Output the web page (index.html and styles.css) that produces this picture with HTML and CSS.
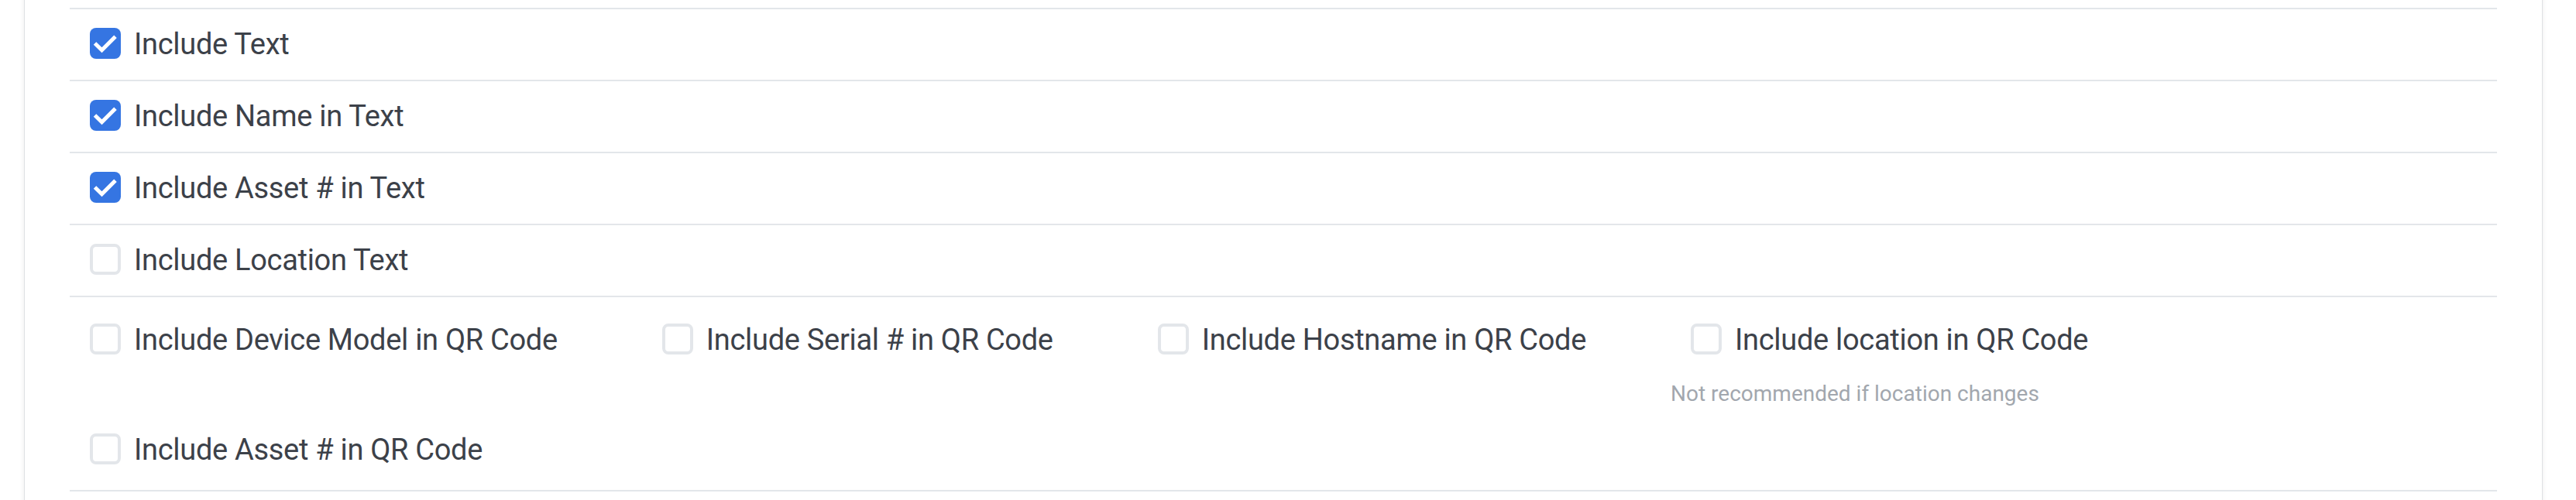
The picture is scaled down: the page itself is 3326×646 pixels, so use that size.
FILE: index.html
```html
<!DOCTYPE html>
<html lang="en">
<head>
<meta charset="utf-8">
<title>Label options</title>
<link rel="stylesheet" href="styles.css">
</head>
<body>
<div class="card">
  <div class="row">
    <label class="opt">
      <span class="box checked"><svg viewBox="0 0 40 40" class="tick"><path d="M6.5 20 L15.5 28.8 L33 11.2"/></svg></span>
      <span class="label">Include Text</span>
    </label>
  </div>
  <div class="row">
    <label class="opt">
      <span class="box checked"><svg viewBox="0 0 40 40" class="tick"><path d="M6.5 20 L15.5 28.8 L33 11.2"/></svg></span>
      <span class="label">Include Name in Text</span>
    </label>
  </div>
  <div class="row">
    <label class="opt">
      <span class="box checked"><svg viewBox="0 0 40 40" class="tick"><path d="M6.5 20 L15.5 28.8 L33 11.2"/></svg></span>
      <span class="label">Include Asset # in Text</span>
    </label>
  </div>
  <div class="row">
    <label class="opt">
      <span class="box"></span>
      <span class="label">Include Location Text</span>
    </label>
  </div>
  <div class="row row-wrap">
    <div class="item">
      <label class="opt">
        <span class="box"></span>
        <span class="label">Include Device Model in QR Code</span>
      </label>
    </div>
    <div class="item">
      <label class="opt">
        <span class="box"></span>
        <span class="label">Include Serial # in QR Code</span>
      </label>
    </div>
    <div class="item">
      <label class="opt">
        <span class="box"></span>
        <span class="label">Include Hostname in QR Code</span>
      </label>
    </div>
    <div class="item">
      <label class="opt">
        <span class="box"></span>
        <span class="label">Include location in QR Code</span>
      </label>
      <p class="hint">Not recommended if location changes</p>
    </div>
    <div class="item">
      <label class="opt">
        <span class="box"></span>
        <span class="label">Include Asset # in QR Code</span>
      </label>
    </div>
  </div>
</div>
</body>
</html>
```
FILE: styles.css
```css
html, body {
  margin: 0;
  padding: 0;
  background: #ffffff;
}

body {
  font-family: Roboto, "Noto Sans", sans-serif;
  color: #3c4149;
  overflow: hidden;
}

.card {
  width: 3134px;
  margin: -30px 0 0 31px;
  padding: 39px 58px 60px;
  border: 1px solid #dfe1e4;
  background: #ffffff;
  box-shadow: 0 0 6px rgba(0, 0, 0, 0.08);
}

.row {
  border-top: 2px solid #e3e6ea;
  padding: 17px 26px 18px;
  display: flex;
  align-items: center;
}

.row-wrap {
  flex-wrap: wrap;
  align-items: flex-start;
  column-gap: 135px;
  row-gap: 24px;
  padding: 27px 26px 24px;
  border-bottom: 2px solid #e3e6ea;
}

.item {
  display: flex;
  flex-direction: column;
}

.opt {
  display: flex;
  align-items: center;
  gap: 17px;
  height: 56px;
}

.box {
  box-sizing: border-box;
  width: 40px;
  height: 40px;
  flex: 0 0 40px;
  border: 4px solid #e3e6ea;
  border-radius: 8px;
  background: #ffffff;
  margin-bottom: 3px;
  display: flex;
}

.box.checked {
  border-color: #3575e2;
  background: #3575e2;
  border-width: 0;
}

.tick {
  width: 40px;
  height: 40px;
  fill: none;
  stroke: #ffffff;
  stroke-width: 5;
}

.label {
  font-size: 38px;
  letter-spacing: -0.3px;
  line-height: 56px;
  white-space: nowrap;
}

.hint {
  margin: 22px 0 0 -26px;
  font-size: 28px;
  line-height: 40px;
  color: #a2a7ae;
  white-space: nowrap;
}
```
